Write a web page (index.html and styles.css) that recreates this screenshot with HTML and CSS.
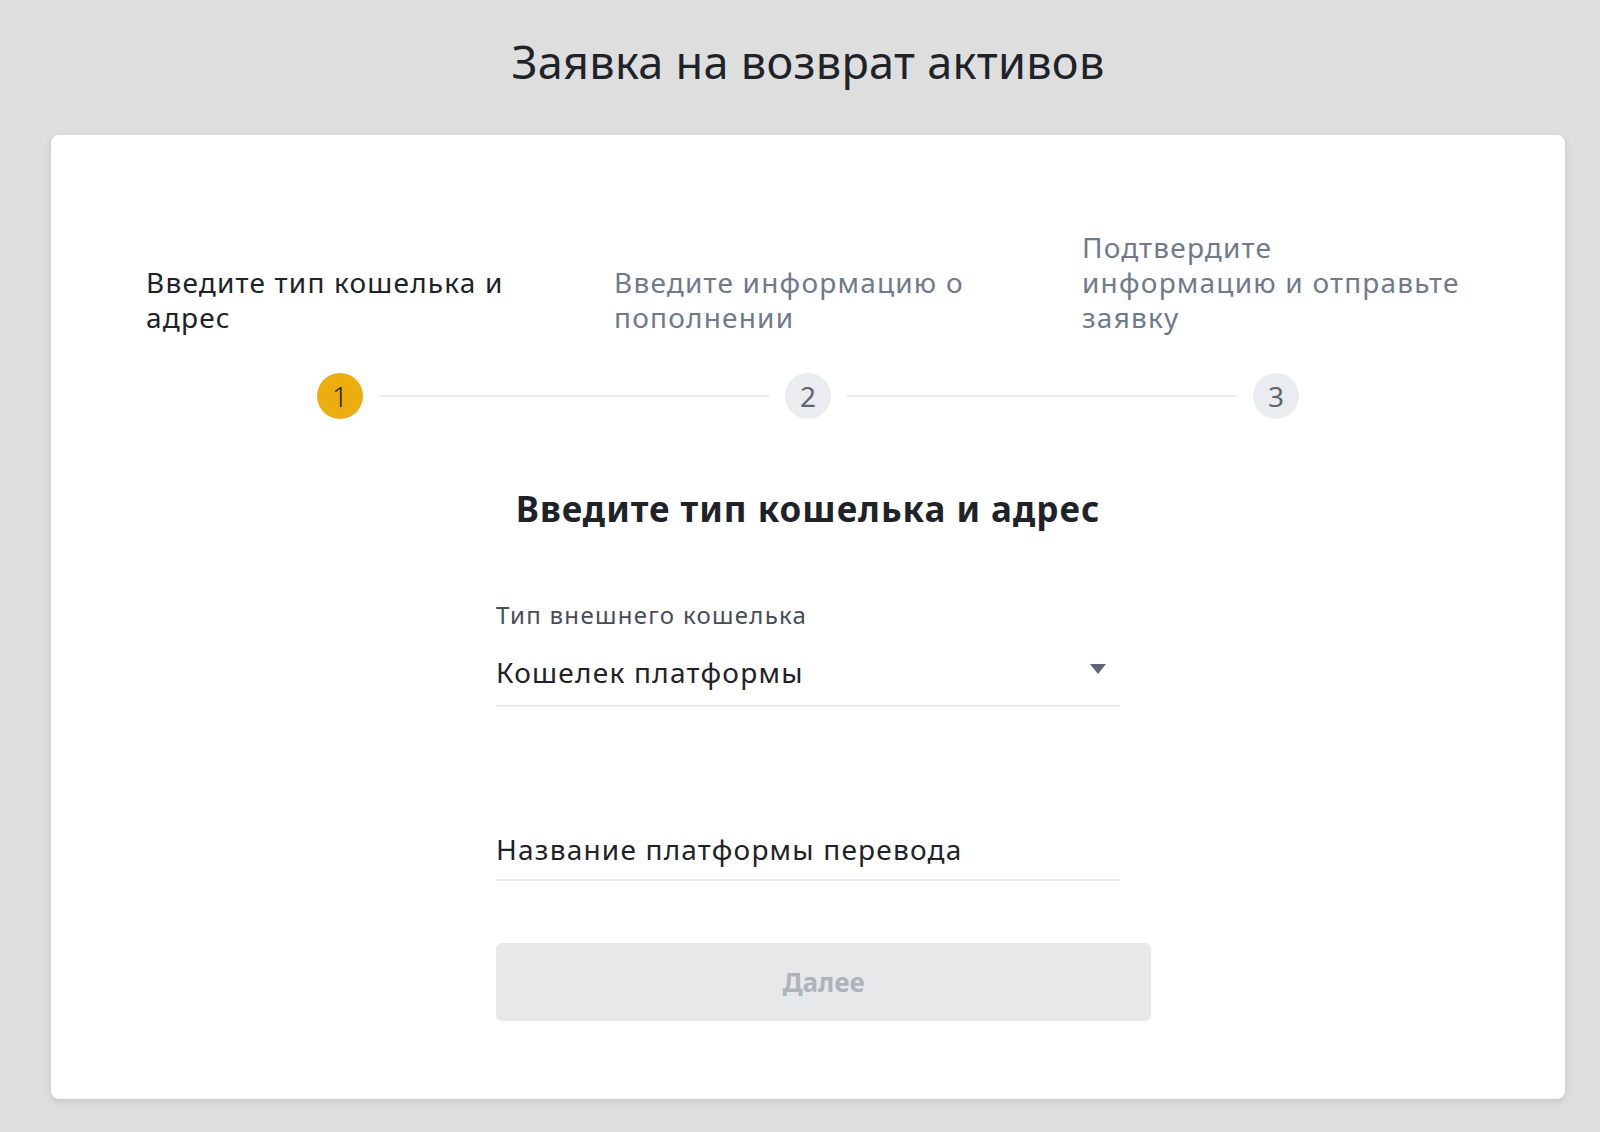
FILE: index.html
```html
<!DOCTYPE html>
<html lang="ru">
<head>
  <meta charset="UTF-8" />
  <meta name="viewport" content="width=device-width, initial-scale=1.0" />
  <title>Заявка на возврат активов</title>
  <link rel="stylesheet" href="styles.css">
</head>
<body>
  <div class="page">
    <h1 class="page-title">Заявка на возврат активов</h1>
    <div class="card">
      <div class="step-labels">
        <div class="step-label active">Введите тип кошелька и<br>адрес</div>
        <div class="step-label">Введите информацию о<br>пополнении</div>
        <div class="step-label">Подтвердите<br>информацию и отправьте<br>заявку</div>
      </div>
      <div class="step-track">
        <div class="step-dot active">1</div>
        <div class="step-line"></div>
        <div class="step-dot">2</div>
        <div class="step-line"></div>
        <div class="step-dot">3</div>
      </div>

      <h2 class="form-title">Введите тип кошелька и адрес</h2>

      <div class="form">
        <div class="field">
          <div class="field-label">Тип внешнего кошелька</div>
          <div class="select">
            <span>Кошелек платформы</span>
            <svg class="caret" width="16" height="10" viewBox="0 0 16 10"><path d="M0 0h16L8 10z" fill="#5e6673"/></svg>
          </div>
        </div>
        <div class="field field-text">
          <div class="placeholder">Название платформы перевода</div>
        </div>
        <button class="next-btn" disabled>Далее</button>
      </div>
    </div>
  </div>
</body>
</html>
```

FILE: styles.css
```css
body {
  margin: 0;
  background: #dedede;
  font-family: 'Noto Sans', 'Open Sans', sans-serif;
  color: #1e2329;
}
.page {
  padding: 0 35px 34px 51px;
}
.page-title {
  margin: 0;
  padding: 34px 0 45px;
  font-size: 45px;
  line-height: 56px;
  letter-spacing: 0.3px;
  font-weight: 400;
  text-align: center;
  color: #1e2329;
}
.card {
  background: white;
  border-radius: 8px;
  box-shadow: 0 2px 6px rgba(0,0,0,0.12);
  padding: 95px 0 78px;
}
.step-labels {
  display: grid;
  grid-template-columns: repeat(3, 388px);
  column-gap: 80px;
  justify-content: center;
  align-items: end;
  margin-bottom: 38px;
}
.step-label {
  font-size: 28px;
  line-height: 35px;
  letter-spacing: 1.2px;
  color: #707a8a;
}
.step-label.active {
  color: #1e2329;
}
.step-track {
  width: 982px;
  margin: 0 auto;
  display: flex;
  align-items: center;
}
.step-dot {
  width: 46px;
  height: 46px;
  border-radius: 50%;
  background: #eaecef;
  color: #5e6673;
  font-size: 28px;
  line-height: 46px;
  text-align: center;
}
.step-dot.active {
  background: #ecad0f;
  color: #1e2329;
  font-weight: 300;
}
.step-line {
  flex: 1;
  height: 2px;
  margin: 0 16px;
  background: #eaecef;
}
.form-title {
  margin: 68px 0 0;
  font-size: 35px;
  line-height: 44px;
  letter-spacing: 1px;
  font-weight: 700;
  text-align: center;
}
.form {
  width: 624px;
  margin: 68px auto 0;
}
.field-label {
  font-size: 24px;
  line-height: 32px;
  letter-spacing: 1.3px;
  color: #474d57;
  margin-bottom: 23px;
}
.select {
  display: flex;
  justify-content: space-between;
  align-items: center;
  font-size: 28px;
  line-height: 36px;
  letter-spacing: 1.25px;
  padding-bottom: 15px;
  border-bottom: 2px solid #eaecef;
}
.caret {
  margin-right: 14px;
  margin-top: -6px;
}
.field-text {
  margin-top: 124px;
  padding-bottom: 12px;
  border-bottom: 2px solid #eaecef;
}
.placeholder {
  font-size: 28px;
  line-height: 36px;
  letter-spacing: 1.2px;
  color: #1e2329;
}
.next-btn {
  display: block;
  width: 655px;
  height: 78px;
  margin-top: 62px;
  border: none;
  border-radius: 6px;
  background: #e6e8ea;
  color: #aeb4bc;
  font-family: inherit;
  font-size: 26px;
  font-weight: 700;
}
```
